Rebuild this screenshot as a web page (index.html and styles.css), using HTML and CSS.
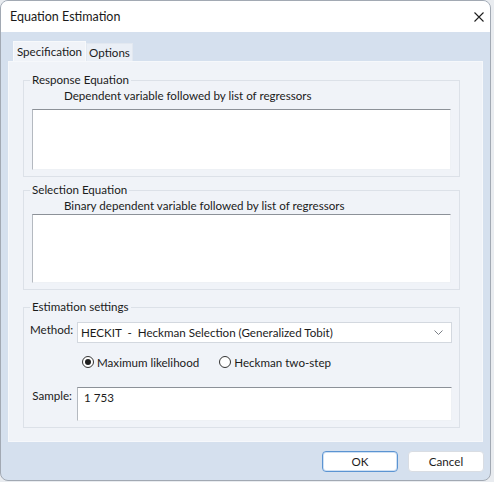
FILE: index.html
```html
<!DOCTYPE html>
<html lang="en">
<head>
<meta charset="utf-8">
<title>Equation Estimation</title>
<link rel="stylesheet" href="styles.css">
</head>
<body>
<div class="window">
  <div class="titlebar">
    <span class="title">Equation Estimation</span>
    <svg class="close" width="10" height="10" viewBox="0 0 10 10"><path d="M0.5 0.5 L9.5 9.5 M9.5 0.5 L0.5 9.5" stroke="#1f1f1f" stroke-width="1.1" fill="none"/></svg>
  </div>
  <div class="body">
    <div class="tabs">
      <div class="tab active">Specification</div>
      <div class="tab">Options</div>
    </div>
    <div class="panel">
      <fieldset class="group g1">
        <legend>Response Equation</legend>
        <div class="hint">Dependent variable followed by list of regressors</div>
        <div class="field f1"></div>
      </fieldset>
      <fieldset class="group g2">
        <legend>Selection Equation</legend>
        <div class="hint">Binary dependent variable followed by list of regressors</div>
        <div class="field f2"></div>
      </fieldset>
      <fieldset class="group g3">
        <legend>Estimation settings</legend>
        <div class="row">
          <span class="lbl">Method:</span>
          <div class="select">
            <span class="sel-text">HECKIT  -  Heckman Selection (Generalized Tobit)</span>
            <svg class="chev" width="9" height="5" viewBox="0 0 9 5"><path d="M0.5 0.5 L4.5 4.5 L8.5 0.5" stroke="#7a7f86" stroke-width="1" fill="none"/></svg>
          </div>
        </div>
        <div class="radios">
          <div class="radio"><span class="circle on"></span><span>Maximum likelihood</span></div>
          <div class="radio"><span class="circle"></span><span>Heckman two-step</span></div>
        </div>
        <div class="row sample-row">
          <span class="lbl">Sample:</span>
          <div class="field f3">1 753</div>
        </div>
      </fieldset>
    </div>
    <div class="buttons">
      <div class="btn default">OK</div>
      <div class="btn">Cancel</div>
    </div>
  </div>
</div>
</body>
</html>
```

FILE: styles.css
```css
* { box-sizing: border-box; }
html, body { margin: 0; padding: 0; }
body {
  background: #e9ecf0;
  font-family: "Lato", "Noto Sans", sans-serif;
  font-size: 11.6px;
  color: #1b1b1b;
}
.window {
  width: 491px;
  height: 481px;
  border: 1px solid #a2a9b3;
  border-radius: 8px;
  overflow: hidden;
  display: flex;
  flex-direction: column;
  background: #d5e0ee;
}
.titlebar {
  height: 31px;
  flex: none;
  background: #ffffff;
  display: flex;
  align-items: center;
  justify-content: space-between;
  padding: 0 6px 0 9px;
}
.title { font-size: 12.5px; color: #1a1a1a; }
.body {
  flex: 1;
  padding: 9px 7px 0 7px;
  display: flex;
  flex-direction: column;
}
.tabs {
  display: flex;
  align-items: flex-end;
  height: 20px;
  padding-left: 5px;
}
.tab {
  height: 18px;
  line-height: 17px;
  padding: 0;
  width: 47px;
  text-align: center;
  background: #eaeff6;
  border: 1px solid #e2e8f0;
  border-bottom: none;
  color: #1b1b1b;
}
.tab.active {
  height: 20px;
  width: 73px;
  line-height: 19px;
  background: #f0f3f8;
  border-color: #f7f9fb;
}
.panel {
  height: 381px;
  background: #f0f3f8;
  border: 1px solid #f6f8fb;
  padding: 10px 22px 0 14px;
  display: flex;
  flex-direction: column;
}
.group {
  margin: 0;
  border: 1px solid #dce1e8;
  padding: 0 8px 6px 8px;
  min-width: 0;
}
.group legend {
  padding: 0 2px;
  margin-left: -2px;
  line-height: 16px;
  height: 16px;
}
.hint {
  line-height: 16px;
  height: 16px;
  padding-left: 32px;
}
.field {
  background: #ffffff;
  border-top: 1px solid #8c9198;
  border-left: 1px solid #b4b9c0;
  border-right: 1px solid #eef1f5;
  border-bottom: 1px solid #eef1f5;
}
.f1 { height: 61px; margin-top: 5px; }
.g2 { margin-top: 5px; }
.f2 { height: 69px; margin-top: 0; }
.g3 { margin-top: 9px; padding: 0 7px 6px 6px; }
.g3 legend { margin-left: 0; }
.row { display: flex; align-items: center; gap: 5px; }
.lbl { width: 42px; text-align: right; flex: none; }
.select {
  flex: 1;
  height: 21px;
  margin-top: 7px;
  background: #ffffff;
  border: 1px solid #d3d8df;
  display: flex;
  align-items: center;
  justify-content: space-between;
  padding: 0 8px 0 3px;
}
.sel-text { white-space: pre; }
.radios {
  display: flex;
  gap: 20px;
  height: 18px;
  margin-top: 10px;
  padding-left: 52px;
  align-items: center;
}
.radio { display: flex; align-items: center; gap: 3px; }
.circle {
  width: 12px;
  height: 12px;
  border: 1px solid #333;
  border-radius: 50%;
  background: #ffffff;
  display: flex;
  align-items: center;
  justify-content: center;
}
.circle.on::after {
  content: "";
  width: 6px;
  height: 6px;
  border-radius: 50%;
  background: #1f1f1f;
}
.sample-row { align-items: flex-start; margin-top: 16px; }
.sample-row .lbl { line-height: 16px; padding-top: 1px; }
.f3 {
  flex: 1;
  height: 34px;
  padding: 2px 6px;
  line-height: 16px;
}
.buttons {
  display: flex;
  justify-content: flex-end;
  gap: 10px;
  margin-top: 9px;
  margin-right: -1px;
}
.btn {
  width: 76px;
  height: 21px;
  border: 1px solid #d9dde3;
  border-radius: 4px;
  background: #ffffff;
  text-align: center;
  line-height: 19px;
}
.btn.default {
  border: 1px solid #5b94d2;
  box-shadow: inset 0 0 0 1px #cfe0f3;
}
```
